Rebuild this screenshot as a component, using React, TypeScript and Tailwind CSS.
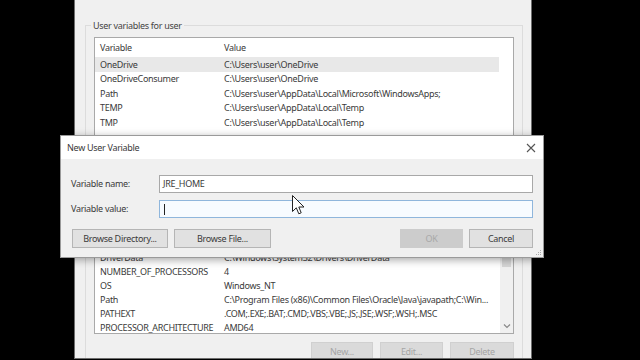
import React from "react";

const font = { fontFamily: '"Noto Sans", "Open Sans", sans-serif' };

const userVars = [
  ["OneDrive", "C:\\Users\\user\\OneDrive"],
  ["OneDriveConsumer", "C:\\Users\\user\\OneDrive"],
  ["Path", "C:\\Users\\user\\AppData\\Local\\Microsoft\\WindowsApps;"],
  ["TEMP", "C:\\Users\\user\\AppData\\Local\\Temp"],
  ["TMP", "C:\\Users\\user\\AppData\\Local\\Temp"],
];

const systemVars = [
  ["ComSpec", "C:\\Windows\\system32\\cmd.exe"],
  ["DriverData", "C:\\Windows\\System32\\Drivers\\DriverData"],
  ["NUMBER_OF_PROCESSORS", "4"],
  ["OS", "Windows_NT"],
  ["Path", "C:\\Program Files (x86)\\Common Files\\Oracle\\Java\\javapath;C:\\Win..."],
  ["PATHEXT", ".COM;.EXE;.BAT;.CMD;.VBS;.VBE;.JS;.JSE;.WSF;.WSH;.MSC"],
  ["PROCESSOR_ARCHITECTURE", "AMD64"],
];

const Row = ({ name, value, selected, h }: { name: string; value: string; selected?: boolean; h: string }) => (
  <div className={`flex items-center min-w-0 overflow-hidden ${h} ${selected ? "bg-[#e8e8e8]" : ""}`}>
    <div className="w-[129px] shrink-0 pl-[5px] whitespace-nowrap overflow-hidden">{name}</div>
    <div className="whitespace-nowrap">{value}</div>
  </div>
);

const WinButton = ({ label, className }: { label: string; className: string }) => (
  <div className={`flex items-center justify-center h-[19px] border shrink-0 ${className}`}>{label}</div>
);

export default function App() {
  return (
    <div
      className="relative w-[640px] h-[360px] bg-black overflow-hidden text-[9px] tracking-[-0.3px] text-[#3a3a3a]"
      style={font}
    >
      {/* environment variables window behind */}
      <div className="ml-[74px] w-[458px] h-[359px] bg-[#f0f0f0] border-l border-r border-b border-[#6e6e6e] flex flex-col overflow-hidden">
        <fieldset className="mt-[19px] ml-[10px] mr-[8px] min-w-0 border border-[#dcdcdc] px-[8px] pb-[8px]">
          <legend className="ml-[-3px] px-[2px] leading-[13px] text-[#444]">User variables for user</legend>
          <div className="mt-[5px] h-[120px] bg-white border border-[#a9a9a9] flex overflow-hidden">
            <div className="flex-1 min-w-0 flex flex-col">
              <div className="flex items-center h-[18px] mt-[1px]">
                <div className="w-[129px] pl-[5px]">Variable</div>
                <div>Value</div>
              </div>
              {userVars.map(([n, v], i) => (
                <Row key={n + i} name={n} value={v} selected={i === 0} h="h-[14.5px]" />
              ))}
            </div>
            <div className="w-[14px] shrink-0" />
          </div>
          <div className="flex justify-end gap-[7px] mt-[8px]">
            <WinButton label="New..." className="w-[62px] bg-[#e1e1e1] border-[#adadad]" />
            <WinButton label="Edit..." className="w-[63px] bg-[#e1e1e1] border-[#adadad]" />
            <WinButton label="Delete" className="w-[64px] bg-[#e1e1e1] border-[#adadad]" />
          </div>
        </fieldset>

        <fieldset className="mt-[12px] ml-[10px] mr-[8px] min-w-0 border border-[#dcdcdc] px-[8px] flex-1">
          <legend className="ml-[-3px] px-[2px] leading-[13px] text-[#444]">System variables</legend>
          <div className="h-[116px] bg-white border border-[#a9a9a9] flex overflow-hidden">
            <div className="flex-1 min-w-0 flex flex-col overflow-hidden">
              <div className="flex items-center h-[18px] shrink-0">
                <div className="w-[129px] pl-[5px]">Variable</div>
                <div>Value</div>
              </div>
              {systemVars.map(([n, v], i) => (
                <Row key={n + i} name={n} value={v} h="h-[14px] shrink-0" />
              ))}
            </div>
            <div className="w-[13px] bg-[#f0f0f0] flex flex-col items-center justify-between shrink-0">
              <div className="mt-[30px] w-[9px] h-[18px] bg-[#d6d6d6]" />
              <svg width="8" height="6" viewBox="0 0 8 6" className="mb-[4px]">
                <path d="M1 1.5 L4 4.5 L7 1.5" fill="none" stroke="#888" strokeWidth="1.2" />
              </svg>
            </div>
          </div>
          <div className="flex justify-end gap-[7px] mt-[8px]">
            <WinButton label="New..." className="w-[62px] bg-[#dadada] border-[#d0d0d0] text-[#a5a5a5]" />
            <WinButton label="Edit..." className="w-[63px] bg-[#dadada] border-[#d0d0d0] text-[#a5a5a5]" />
            <WinButton label="Delete" className="w-[64px] bg-[#dadada] border-[#d0d0d0] text-[#a5a5a5]" />
          </div>
        </fieldset>
      </div>

      {/* New User Variable dialog */}
      <div className="absolute left-[60px] top-[135px] w-[484px] h-[123px] border border-[#9a9a9a] bg-[#f0f0f0] shadow-[0_2px_8px_rgba(0,0,0,0.35)] flex flex-col">
        <div className="h-[23px] bg-white flex items-center justify-between pl-[6px] pr-[6px] shrink-0">
          <span className="text-[#3a3a3a]">New User Variable</span>
          <svg width="10" height="10" viewBox="0 0 10 10" className="mr-[1px]">
            <path d="M1 1 L9 9 M9 1 L1 9" stroke="#555" strokeWidth="1.1" />
          </svg>
        </div>
        <div className="flex-1 flex flex-col px-[10px] pt-[16px] relative">
          <div className="flex items-center h-[18px]">
            <div className="w-[88px] shrink-0">Variable name:</div>
            <div className="flex-1 h-[18px] bg-white border border-[#a8a8a8] flex items-center pl-[3px]">JRE_HOME</div>
          </div>
          <div className="flex items-center h-[18px] mt-[7px]">
            <div className="w-[88px] shrink-0">Variable value:</div>
            <div className="flex-1 h-[18px] bg-[#f7fbff] border border-[#8fb6dc] flex items-center pl-[4px]">
              <div className="w-px h-[11px] bg-[#222]" />
            </div>
          </div>
          <div className="flex items-center mt-[11px]">
            <WinButton label="Browse Directory..." className="w-[96px] ml-[1px] bg-[#e1e1e1] border-[#b5b5b5]" />
            <WinButton label="Browse File..." className="w-[97px] ml-[6px] bg-[#e1e1e1] border-[#b5b5b5]" />
            <div className="flex-1" />
            <WinButton label="OK" className="w-[63px] bg-[#cccccc] border-[#cccccc] text-[#a8a8a8]" />
            <WinButton label="Cancel" className="w-[64px] ml-[6px] bg-[#e1e1e1] border-[#b5b5b5]" />
          </div>
          <svg width="8" height="8" viewBox="0 0 8 8" className="absolute right-[1px] bottom-[1px]">
            <rect x="6" y="2" width="1" height="1" fill="#aaa" />
            <rect x="4" y="4" width="1" height="1" fill="#aaa" />
            <rect x="6" y="4" width="1" height="1" fill="#aaa" />
            <rect x="2" y="6" width="1" height="1" fill="#aaa" />
            <rect x="4" y="6" width="1" height="1" fill="#aaa" />
            <rect x="6" y="6" width="1" height="1" fill="#aaa" />
          </svg>
        </div>
      </div>

      {/* mouse pointer */}
      <svg width="13" height="21" viewBox="0 0 13 21" className="absolute left-[292px] top-[195px]">
        <path d="M0.5 0.5 L0.5 16.5 L4.3 12.8 L6.8 18.8 L9.2 17.8 L6.8 12 L12 12 Z" fill="#fff" stroke="#222" strokeWidth="1" strokeLinejoin="round" />
      </svg>
    </div>
  );
}
